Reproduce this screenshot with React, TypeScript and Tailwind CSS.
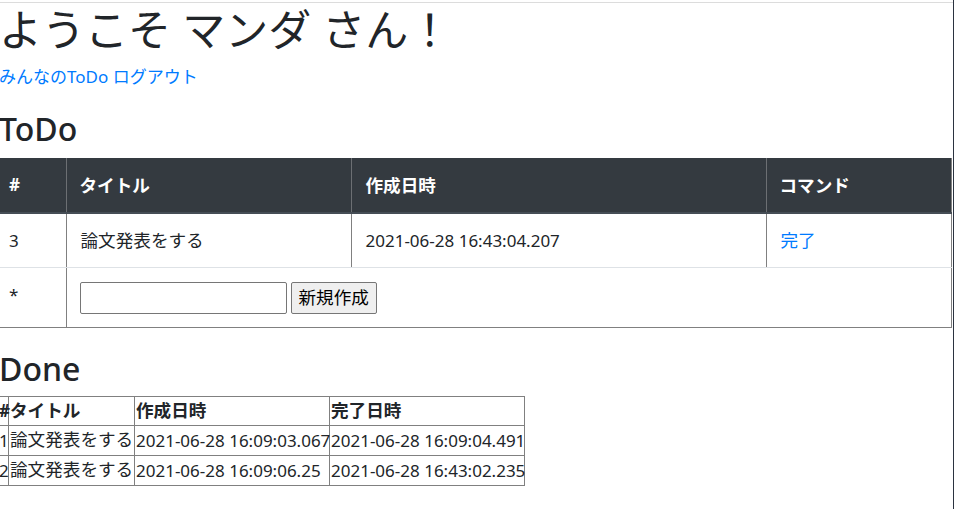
const FONT = "font-['Noto_Sans','Noto_Sans_CJK_JP',sans-serif]";
// Japanese runs sit a touch wider than the Latin digits beside them
const JP = "text-[17.6px]";

type TodoRow = { id: number; title: string; createdAt: string };
type DoneRow = TodoRow & { doneAt: string };

const todos: TodoRow[] = [
  { id: 3, title: "論文発表をする", createdAt: "2021-06-28 16:43:04.207" },
];

const dones: DoneRow[] = [
  {
    id: 1,
    title: "論文発表をする",
    createdAt: "2021-06-28 16:09:03.067",
    doneAt: "2021-06-28 16:09:04.491",
  },
  {
    id: 2,
    title: "論文発表をする",
    createdAt: "2021-06-28 16:09:06.25",
    doneAt: "2021-06-28 16:43:02.235",
  },
];

function TodoTable() {
  return (
    <table className="w-[953px] table-fixed border-collapse text-[17px] text-[#212529]">
      <colgroup>
        <col className="w-[67px]" />
        <col className="w-[285px]" />
        <col className="w-[415px]" />
        <col />
      </colgroup>
      <thead>
        <tr className="h-[55px] bg-[#343a40] text-left text-white">
          <th className="border-r border-b-2 border-r-[#6c6f73] border-b-[#454d55] px-[10px] font-bold">#</th>
          <th className={`${JP} border-r border-b-2 border-r-[#6c6f73] border-b-[#454d55] px-[13px] font-bold`}>タイトル</th>
          <th className={`${JP} border-r border-b-2 border-r-[#6c6f73] border-b-[#454d55] px-[14px] font-bold`}>作成日時</th>
          <th className={`${JP} border-r border-b-2 border-r-[#808080] border-b-[#454d55] px-[13px] font-bold`}>コマンド</th>
        </tr>
      </thead>
      <tbody>
        {todos.map((t) => (
          <tr key={t.id} className="h-[54px]">
            <td className="border-r border-b border-r-[#808080] border-b-[#dee2e6] px-[10px]">{t.id}</td>
            <td className={`${JP} border-r border-b border-r-[#808080] border-b-[#dee2e6] px-[14px]`}>{t.title}</td>
            <td className="border-r border-b border-r-[#808080] border-b-[#dee2e6] px-[14px]">{t.createdAt}</td>
            <td className={`${JP} border-r border-b border-r-[#808080] border-b-[#dee2e6] px-[14px]`}>
              <a href="#" className="text-[#007bff]">完了</a>
            </td>
          </tr>
        ))}
        <tr className="h-[60px]">
          <td className="border-r border-b border-[#808080] px-[10px] pt-[14px] align-top">*</td>
          <td colSpan={3} className="border-r border-b border-[#808080] px-[13px] align-top">
            <div className="flex items-center gap-1 pt-[14px]">
              <input
                type="text"
                className="h-[32px] w-[207px] rounded-[2px] border border-[#767676] bg-white px-1"
              />
              <button className={`${JP} h-[32px] rounded-[2px] border border-[#767676] bg-[#efefef] px-[7px] text-black`}>
                新規作成
              </button>
            </div>
          </td>
        </tr>
      </tbody>
    </table>
  );
}

function DoneTable() {
  const cell = "border border-[#808080] px-px whitespace-nowrap";
  return (
    <table className="-ml-[2px] w-[528px] table-fixed border-collapse text-[17px] leading-none text-[#212529]">
      <colgroup>
        <col className="w-[11px]" />
        <col className="w-[126px]" />
        <col className="w-[195px]" />
        <col className="w-[195px]" />
      </colgroup>
      <thead>
        <tr className="h-[29px] text-left">
          <th className={`${cell} font-bold`}>#</th>
          <th className={`${cell} ${JP} font-bold`}>タイトル</th>
          <th className={`${cell} ${JP} font-bold`}>作成日時</th>
          <th className={`${cell} ${JP} font-bold`}>完了日時</th>
        </tr>
      </thead>
      <tbody>
        {dones.map((d) => (
          <tr key={d.id} className="h-[30px]">
            <td className={cell}>{d.id}</td>
            <td className={`${cell} ${JP}`}>{d.title}</td>
            <td className={cell}>{d.createdAt}</td>
            <td className={cell}>{d.doneAt}</td>
          </tr>
        ))}
      </tbody>
    </table>
  );
}

export default function App() {
  return (
    <div className={`${FONT} min-h-[509px] w-[954px] overflow-hidden border-r border-[#2b3340] bg-white pt-[2px]`}>
      <div className="min-h-[507px] border-t border-[#dcdcdc] -ml-px">
        <h1 className="mt-[3px] text-[43px] leading-[48px] font-normal text-[#212529]">
          ようこそ マンダ さん！
        </h1>
        <div className="mt-[11px] text-[17px] leading-6">
          <a href="#" className="text-[#007bff]">みんなのToDo</a>{" "}
          <a href="#" className="text-[#007bff]">ログアウト</a>
        </div>
        <h2 className="mt-[21px] mb-[10px] text-[32px] leading-[38px] font-medium text-[#212529]">ToDo</h2>
        <TodoTable />
        <h2 className="mt-[22px] mb-[8px] text-[32px] leading-[38px] font-medium text-[#212529]">Done</h2>
        <DoneTable />
      </div>
    </div>
  );
}
